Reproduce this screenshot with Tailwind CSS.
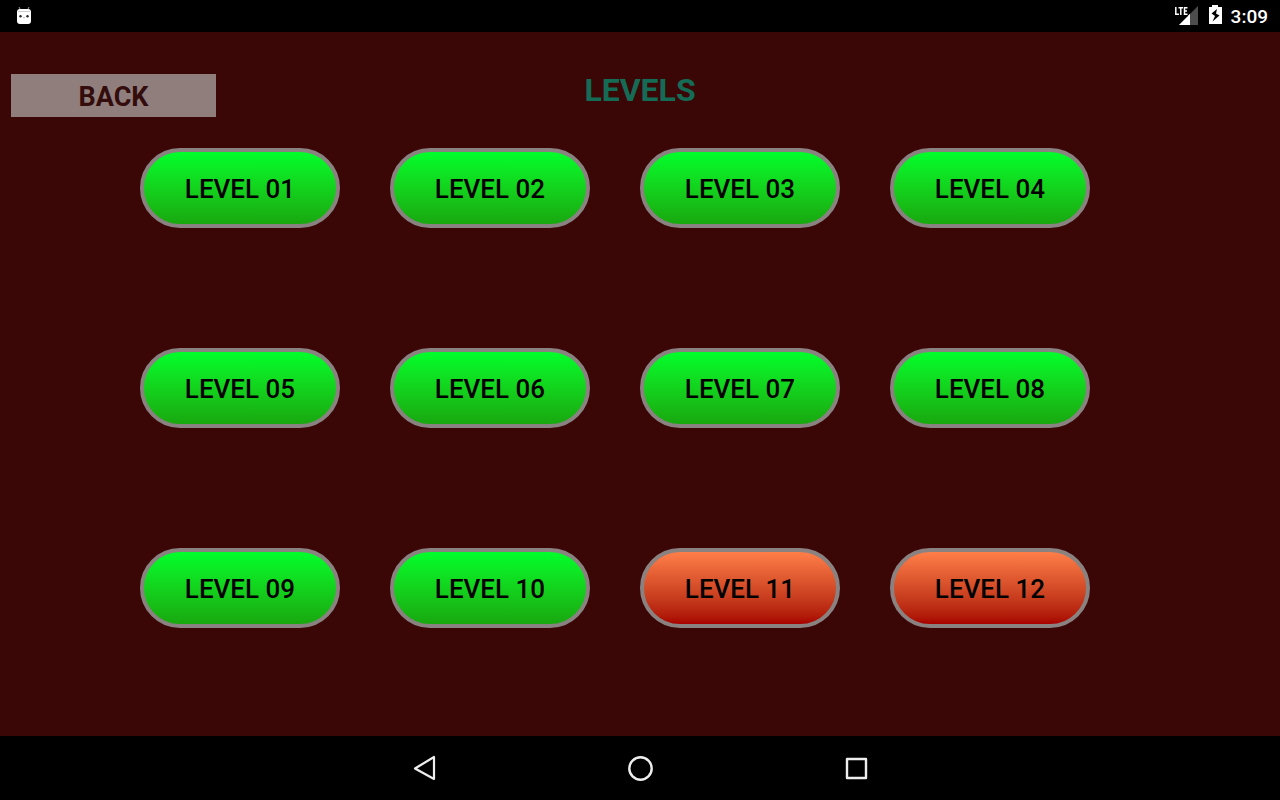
<!DOCTYPE html>
<html lang="en">
<head>
<meta charset="utf-8">
<meta name="viewport" content="width=device-width, initial-scale=1">
<title>Levels</title>
<script src="https://cdn.jsdelivr.net/npm/@tailwindcss/browser@4"></script>
</head>
<body class="flex min-h-screen flex-col bg-[#3b0606] font-['Roboto',sans-serif]">
  <!-- Status bar -->
  <div class="flex h-8 items-center justify-between bg-black pl-4 pr-3 text-white">
    <svg class="h-8 w-4" viewBox="0 0 16 32" aria-hidden="true">
      <path d="M3 7l2 4M13 7l-2 4" stroke="#999" stroke-width="1"/>
      <path d="M1 12Q1 9 4 9H12Q15 9 15 12V21Q15 24 12 24H4Q1 24 1 21Z" fill="#fff"/>
      <path d="M2 11.500H14" stroke="#ccc" stroke-width="1"/>
      <circle cx="4.500" cy="16.300" r="1.200" fill="#222"/><circle cx="11.500" cy="16.300" r="1.200" fill="#222"/>
      <path d="M7 17l1 1 1-1" fill="none" stroke="#999" stroke-width=".6"/>
    </svg>
    <div class="flex items-center">
      <svg class="mr-2 h-8 w-7" viewBox="0 0 28 32" role="img" aria-label="LTE signal">
        <path d="M27 6V25H8Z" fill="#4d4d4d"/>
        <path d="M19 14V25H8Z" fill="#fff"/>
        <path d="M3 4H17V17H3Z" fill="#000"/>
        <path d="M19 14V17H16Z" fill="#fff"/>
        <path d="M4.800 7V14.200H8M7.500 7.800H12M9.800 7.800V15M16.500 7.800H13.500V14.200H16.500M13.500 11H16" fill="none" stroke="#fff" stroke-width="1.500"/>
      </svg>
      <svg class="mr-2 h-8 w-4" viewBox="0 0 16 32" role="img" aria-label="Battery charging">
        <path d="M2 7H5V5H11V7H15V24H2Z" fill="#fff"/>
        <path d="M10 9L4.500 13.500L8 16L5.500 21.500L12.500 15.500L9 13.500Z" fill="#000"/>
      </svg>
      <span class="pt-px text-[19px] leading-7 font-medium">3:09</span>
    </div>
  </div>

  <main class="grow">
    <header class="grid grid-cols-[1fr_auto_1fr] items-start px-[11px] pt-[42px]">
      <button class="h-[43px] w-[205px] bg-[#8f7e7c] pt-[2px] text-[27px] leading-8 font-bold text-[#330c0c]">BACK</button>
      <h1 class="text-[32px] leading-8 font-bold text-[#146c56]">LEVELS</h1>
    </header>
    <div class="mt-[31px] grid grid-cols-[repeat(4,200px)] gap-x-[50px] gap-y-[120px] pl-[140px] *:h-20 *:rounded-full *:border-4 *:border-[#8a8280] *:bg-linear-to-b *:pt-[2px] *:text-[26px] *:font-medium *:text-black">
      <button class="from-[#00ff2b] to-[#18a80f]">LEVEL 01</button>
      <button class="from-[#00ff2b] to-[#18a80f]">LEVEL 02</button>
      <button class="from-[#00ff2b] to-[#18a80f]">LEVEL 03</button>
      <button class="from-[#00ff2b] to-[#18a80f]">LEVEL 04</button>
      <button class="from-[#00ff2b] to-[#18a80f]">LEVEL 05</button>
      <button class="from-[#00ff2b] to-[#18a80f]">LEVEL 06</button>
      <button class="from-[#00ff2b] to-[#18a80f]">LEVEL 07</button>
      <button class="from-[#00ff2b] to-[#18a80f]">LEVEL 08</button>
      <button class="from-[#00ff2b] to-[#18a80f]">LEVEL 09</button>
      <button class="from-[#00ff2b] to-[#18a80f]">LEVEL 10</button>
      <button class="from-[#ff7e48] to-[#a80000]">LEVEL 11</button>
      <button class="from-[#ff7e48] to-[#a80000]">LEVEL 12</button>
    </div>
  </main>

  <!-- System navigation -->
  <nav class="flex h-16 items-center justify-center gap-[184px] bg-black">
    <button aria-label="Back"><svg class="block size-8" viewBox="0 0 32 32" fill="none" stroke="#eee" stroke-width="2.200" stroke-linejoin="round"><path d="M26 5V27L7 16.500Z"/></svg></button>
    <button aria-label="Home"><svg class="block size-8" viewBox="0 0 32 32" fill="none" stroke="#eee" stroke-width="2.400"><circle cx="16.500" cy="16.500" r="11.200"/></svg></button>
    <button aria-label="Recent apps"><svg class="block size-8" viewBox="0 0 32 32" fill="none" stroke="#eee" stroke-width="2.400" stroke-linejoin="round"><path d="M7 7H26V26H7Z"/></svg></button>
  </nav>
</body>
</html>
